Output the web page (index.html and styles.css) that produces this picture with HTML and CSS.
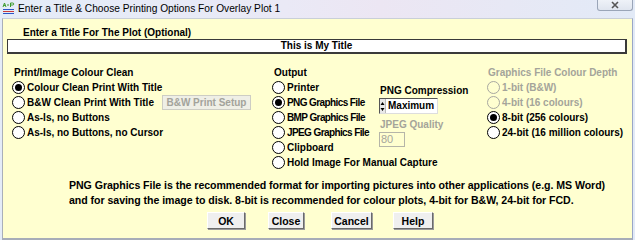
FILE: index.html
```html
<!DOCTYPE html>
<html>
<head>
<meta charset="utf-8">
<link rel="stylesheet" href="styles.css">
</head>
<body>
<div class="window">
  <div class="titlebar">
    <svg class="appicon" width="13" height="12" viewBox="0 0 13 12">
      <path d="M1 5 L2.5 1 L4 5 M1.7 3.4 H3.3" stroke="#3a9a2a" stroke-width="1" fill="none"/>
      <path d="M5 3 H7" stroke="#3a9a2a" stroke-width="1"/>
      <path d="M8.5 5 V1 H10.5 Q11.8 1 11.8 2 Q11.8 3 10.5 3 H8.5" stroke="#3a9a2a" stroke-width="1" fill="none"/>
      <path d="M1 7.5 H12" stroke="#2a56c8" stroke-width="1"/>
      <path d="M1 9.5 H12" stroke="#c83a3a" stroke-width="1"/>
      <path d="M1 11.5 H12" stroke="#2a56c8" stroke-width="1"/>
    </svg>
    <span class="wtitle">Enter a Title &amp; Choose Printing Options For Overlay Plot 1</span>
    <div class="closebtn"><svg width="10" height="8" viewBox="0 0 10 8"><path d="M2 1 L8 7 M8 1 L2 7" stroke="#555" stroke-width="1.6"/></svg></div>
  </div>
  <div class="client">
    <div class="heading">Enter a Title For The Plot (Optional)</div>
    <div class="titlefield">This is My Title</div>

    <div class="columns">
      <div class="col col1">
        <div class="sechead">Print/Image Colour Clean</div>
        <div class="row"><span class="radio on"></span>Colour Clean Print With Title</div>
        <div class="row"><span class="radio"></span>B&amp;W Clean Print With Title<span class="setupbtn">B&amp;W Print Setup</span></div>
        <div class="row"><span class="radio"></span>As-Is, no Buttons</div>
        <div class="row"><span class="radio"></span>As-Is, no Buttons, no Cursor</div>
      </div>
      <div class="col col2">
        <div class="outlist">
          <div class="sechead">Output</div>
          <div class="row"><span class="radio"></span>Printer</div>
          <div class="row tight"><span class="radio on"></span>PNG Graphics File</div>
          <div class="row tight"><span class="radio"></span>BMP Graphics File</div>
          <div class="row tight"><span class="radio"></span>JPEG Graphics File</div>
          <div class="row"><span class="radio"></span>Clipboard</div>
          <div class="row"><span class="radio"></span>Hold Image For Manual Capture</div>
        </div>
        <div class="options">
          <div class="optlabel">PNG Compression</div>
          <div class="spinner">
            <div class="spinarrows">
              <svg width="5" height="13" viewBox="0 0 5 13"><path d="M0.5 5 L2.5 2 L4.5 5 Z M0.5 8 L2.5 11 L4.5 8 Z" fill="#000"/></svg>
            </div>
            <div class="spinval">Maximum</div>
          </div>
          <div class="optlabel dis">JPEG Quality</div>
          <div class="quality">80</div>
        </div>
      </div>
      <div class="col col3">
        <div class="sechead dis">Graphics File Colour Depth</div>
        <div class="row dis"><span class="radio dis"></span>1-bit (B&amp;W)</div>
        <div class="row dis"><span class="radio dis"></span>4-bit (16 colours)</div>
        <div class="row"><span class="radio on"></span>8-bit (256 colours)</div>
        <div class="row"><span class="radio"></span>24-bit (16 million colours)</div>
      </div>
    </div>

    <div class="notes">
      <div>PNG Graphics File is the recommended format for importing pictures into other applications (e.g. MS Word)</div>
      <div>and for saving the image to disk. 8-bit is recommended for colour plots, 4-bit for B&amp;W, 24-bit for FCD.</div>
    </div>

    <div class="buttons">
      <span class="btn b-ok">OK</span>
      <span class="btn b-close">Close</span>
      <span class="btn b-cancel">Cancel</span>
      <span class="btn b-help">Help</span>
    </div>
  </div>
</div>
</body>
</html>
```
FILE: styles.css
```css
* { box-sizing: border-box; }
html, body { margin: 0; padding: 0; }
body {
  width: 635px;
  height: 240px;
  overflow: hidden;
  background: #dfe8f5;
  font-family: "Liberation Sans", Arial, sans-serif;
}
.window {
  width: 635px;
  height: 240px;
  display: flex;
  flex-direction: column;
  background: linear-gradient(90deg, #e4ecf8 0%, #eae9f6 45%, #ece6f3 60%, #e2eaf7 100%);
}
.titlebar {
  height: 18px;
  display: flex;
  align-items: center;
  position: relative;
  padding-left: 2px;
}
.appicon { margin-right: 3px; margin-top: -2px; }
.wtitle {
  font-size: 10.2px;
  color: #000;
  margin-top: -1px;
}
.closebtn {
  position: absolute;
  right: 2px;
  top: 0;
  width: 36px;
  height: 11px;
  border: 1px solid #9aa5b8;
  border-top: none;
  border-radius: 0 0 3px 3px;
  background: linear-gradient(#eef2f8, #dfe5ef);
  display: flex;
  align-items: center;
  justify-content: center;
}
.client {
  flex: 1;
  margin: 0 2px 0 2px;
  background: #ffffd0;
  border-top: 1px solid #c9cfd8;
  border-left: 1px solid #a9afb9;
  border-right: 1px solid #9aa6c6;
  border-bottom: 2px solid #a7adb8;
  font-size: 10px;
  font-weight: bold;
  color: #000;
  display: flex;
  flex-direction: column;
}
.heading {
  margin: 8px 0 0 20px;
  height: 12px;
  line-height: 12px;
}
.titlefield {
  margin: 0 5px 0 4px;
  height: 15px;
  border: 1px solid #3a3a3a;
  border-bottom-width: 2px;
  border-right-width: 2px;
  background: #fff;
  text-align: center;
  line-height: 12px;
}
.columns {
  display: grid;
  grid-template-columns: 260px 214px 1fr;
  margin: 11px 0 0 9px;
  height: 120px;
}
.col { display: flex; flex-direction: column; }
.sechead { height: 15px; line-height: 15px; padding-left: 2px; }
.row {
  height: 15px;
  display: flex;
  align-items: center;
  white-space: nowrap;
}
.row.tight { letter-spacing: -0.6px; }
.dis { color: #a4a49a; }
.radio {
  width: 13px;
  height: 13px;
  border: 1px solid #000;
  border-radius: 50%;
  background: #fff;
  margin-right: 2px;
  position: relative;
  flex: none;
}
.radio.on::after {
  content: "";
  position: absolute;
  left: 2px;
  top: 2px;
  width: 7px;
  height: 7px;
  border-radius: 50%;
  background: #000;
}
.radio.dis { border-color: #a8a8a0; background: #ffffd0; }
.setupbtn {
  margin-left: 8px;
  height: 15px;
  width: 89px;
  display: flex;
  align-items: center;
  justify-content: center;
  background: #efefe6;
  border: 1px solid #cdcdc4;
  color: #a3a39b;
  letter-spacing: 0;
}
.col2 { flex-direction: row; }
.outlist { display: flex; flex-direction: column; width: 107px; }
.options { display: flex; flex-direction: column; padding-top: 19px; }
.optlabel { height: 14px; line-height: 14px; padding-left: 1px; }
.optlabel.dis { margin-top: 4px; }
.spinner {
  display: flex;
  width: 59px;
  height: 16px;
  border-top: 1px solid #555;
  border-left: 1px solid #555;
  border-right: 1px solid #ddd;
  border-bottom: 1px solid #ddd;
  background: #fff;
}
.spinarrows {
  width: 6px;
  background: #e8e8e8;
  display: flex;
  align-items: center;
  border-right: 1px solid #bbb;
}
.spinval { padding-left: 2px; line-height: 13px; }
.quality {
  width: 26px;
  height: 15px;
  border: 1px solid #b5b5a8;
  color: #a6a69c;
  font-weight: normal;
  font-size: 11px;
  line-height: 13px;
  padding-left: 1px;
}
.col3 { padding-left: 1px; }
.col3 .sechead { padding-left: 1px; }
.notes {
  margin: -7px 0 0 66px;
  line-height: 15px;
  height: 30px;
  font-size: 10.6px;
  letter-spacing: -0.05px;
}
.buttons {
  display: flex;
  margin-top: 4px;
  padding-left: 204px;
}
.btn {
  height: 17px;
  display: flex;
  align-items: center;
  justify-content: center;
  background: #efefef;
  border-top: 1px solid #fff;
  border-left: 1px solid #fff;
  border-right: 1px solid #6a6a6a;
  border-bottom: 1px solid #6a6a6a;
  box-shadow: 1px 1px 0 #9a9a9a;
  font-size: 10.5px;
}
.b-ok { width: 38px; }
.b-close { width: 36px; margin-left: 23px; }
.b-cancel { width: 41px; margin-left: 27px; }
.b-help { width: 40px; margin-left: 21px; }
```
